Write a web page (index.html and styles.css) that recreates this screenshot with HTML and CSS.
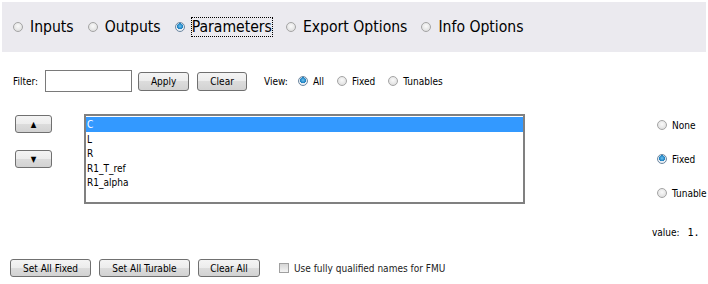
FILE: index.html
```html
<!DOCTYPE html>
<html lang="en">
<head>
    <meta charset="UTF-8">
    <title>Parameters</title>
    <link rel="stylesheet" href="styles.css">
</head>
<body>
    <div class="tabs">
        <label class="tab"><span class="radio"></span>Inputs</label>
        <label class="tab"><span class="radio"></span>Outputs</label>
        <label class="tab"><span class="radio on"></span><span class="focus">Parameters</span></label>
        <label class="tab"><span class="radio"></span>Export Options</label>
        <label class="tab"><span class="radio"></span>Info Options</label>
    </div>

    <div class="filter-row">
        <span class="lbl">Filter:</span>
        <input class="filter" type="text">
        <button class="btn apply">Apply</button>
        <button class="btn clear">Clear</button>
        <span class="lbl view">View:</span>
        <label class="opt"><span class="radio small on"></span>All</label>
        <label class="opt"><span class="radio small"></span>Fixed</label>
        <label class="opt"><span class="radio small"></span>Tunables</label>
    </div>

    <div class="middle">
        <div class="movers">
            <button class="btn arrow">&#9650;</button>
            <button class="btn arrow">&#9660;</button>
        </div>
        <ul class="list">
            <li class="sel">C</li>
            <li>L</li>
            <li>R</li>
            <li>R1_T_ref</li>
            <li>R1_alpha</li>
        </ul>
        <div class="kind">
            <label class="opt"><span class="radio small"></span>None</label>
            <label class="opt"><span class="radio small on"></span>Fixed</label>
            <label class="opt"><span class="radio small"></span>Tunable</label>
            <div class="value">value: <span class="mono">1.</span></div>
        </div>
    </div>

    <div class="bottom">
        <button class="btn wide1">Set All Fixed</button>
        <button class="btn wide2">Set All Turable</button>
        <button class="btn wide3">Clear All</button>
        <label class="check"><span class="box"></span>Use fully qualified names for FMU</label>
    </div>
</body>
</html>
```

FILE: styles.css
```css
body {
    margin: 0;
    background: white;
    color: black;
    font-family: "DejaVu Sans Condensed", "DejaVu Sans", sans-serif;
    font-stretch: condensed;
    font-size: 10px;
    width: 708px;
    height: 284px;
    overflow: hidden;
}
.tabs {
    margin: 2px 2px 0 2px;
    height: 50px;
    background: #ebeaef;
    display: flex;
    align-items: center;
    padding-left: 11px;
    font-size: 15.6px;
}
.tab {
    display: flex;
    align-items: center;
    margin-right: 14px;
}
.focus {
    outline: 1px dotted #000;
    outline-offset: 0;
}
.radio {
    display: inline-block;
    flex-shrink: 0;
    width: 8px;
    height: 8px;
    border: 1px solid #a4a4a4;
    border-radius: 50%;
    background: radial-gradient(circle at 50% 40%, #fafafa, #d8d8d8);
    margin-right: 7px;
    box-sizing: content-box;
}
.radio.on {
    border-color: #6c87a0;
    background: radial-gradient(circle at 50% 40%, #6fc2f0 0, #1a7fc0 45%, #e8eef4 50%, #e8eef4 100%);
}
.radio.small {
    width: 8px;
    height: 8px;
    margin-right: 5px;
}
.filter-row {
    display: flex;
    align-items: center;
    height: 22px;
    margin-top: 18px;
    padding-left: 13px;
}
.filter {
    width: 87px;
    height: 22px;
    box-sizing: border-box;
    border: 1px solid #7a7a7a;
    padding: 0;
    margin: 0 6px 0 7px;
}
.btn {
    font-family: inherit;
    font-stretch: condensed;
    font-size: 10px;
    color: black;
    border: 1px solid #707070;
    border-radius: 3px;
    background: linear-gradient(#f4f4f4 0, #ececec 50%, #dcdcdc 50%, #d2d2d2 100%);
    padding: 0;
    height: 19px;
    box-sizing: border-box;
}
.apply { width: 51px; margin-right: 8px; }
.clear { width: 50px; margin-right: 17px; }
.view { margin-right: 10px; }
.opt {
    display: flex;
    align-items: center;
    margin-right: 13px;
}
.middle {
    display: flex;
    margin-top: 22px;
}
.movers {
    display: flex;
    flex-direction: column;
    flex-shrink: 0;
    gap: 17px;
    padding-left: 15px;
    width: 69px;
    padding-top: 1px;
}
.arrow {
    width: 37px;
    height: 18px;
    font-size: 8px;
    font-stretch: normal;
}
.list {
    list-style: none;
    flex-shrink: 0;
    margin: 0;
    padding: 1px 0 0 0;
    width: 441px;
    height: 90px;
    box-sizing: border-box;
    border: 2px solid #808080;
    font-size: 10px;
}
.list li {
    height: 14.6px;
    line-height: 15px;
    padding-left: 1px;
}
.list li.sel {
    background: #3399ff;
    color: white;
}
.kind {
    flex-shrink: 0;
    margin-left: 132px;
    padding-top: 5px;
    display: flex;
    flex-direction: column;
    gap: 22px;
}
.kind .opt { height: 12px; }
.value {
    margin-left: -5px;
    margin-top: 6px;
}
.mono {
    font-family: "DejaVu Sans Mono", monospace;
    font-stretch: normal;
    margin-left: 5px;
}
.bottom {
    display: flex;
    align-items: center;
    margin-top: 21px;
    padding-left: 10px;
}
.bottom .btn { height: 18px; margin-right: 8px; }
.wide1 { width: 81px; }
.wide2 { width: 91px; }
.wide3 { width: 62px; margin-right: 19px !important; }
.check {
    display: flex;
    align-items: center;
    color: #222;
}
.box {
    width: 8px;
    height: 8px;
    border: 1px solid #a0a0a0;
    background: linear-gradient(#d6d6d6, #f4f4f4);
    margin-right: 5px;
}
```
